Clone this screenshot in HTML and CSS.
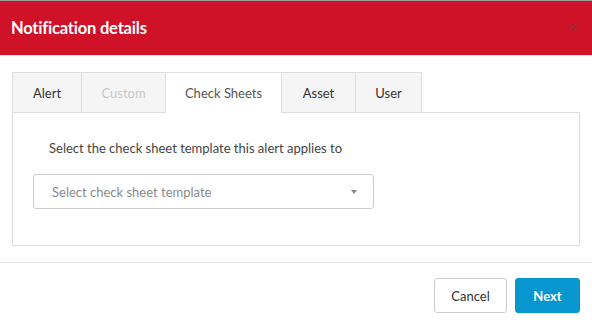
FILE: index.html
```html
<!DOCTYPE html>
<html>
<head>
<meta charset="utf-8">
<link rel="stylesheet" href="styles.css">
</head>
<body>
<div class="modal">
  <div class="modal-header">
    <h1 class="modal-title">Notification details</h1>
    <span class="close">&times;</span>
  </div>
  <div class="modal-body">
    <ul class="tabs">
      <li class="tab">Alert</li>
      <li class="tab disabled">Custom</li>
      <li class="tab active">Check Sheets</li>
      <li class="tab">Asset</li>
      <li class="tab">User</li>
    </ul>
    <div class="tab-panel">
      <p class="label">Select the check sheet template this alert applies to</p>
      <div class="select">
        <span class="placeholder">Select check sheet template</span>
        <span class="caret"></span>
      </div>
    </div>
  </div>
  <div class="modal-footer">
    <button class="btn btn-default">Cancel</button>
    <button class="btn btn-primary">Next</button>
  </div>
</div>
</body>
</html>
```

FILE: styles.css
```css
* { box-sizing: border-box; }
html, body { margin: 0; padding: 0; background: #fff; }
body { font-family: Lato, "Open Sans", sans-serif; color: #444; }

.modal { width: 592px; height: 325px; border-top: 1px solid #9a9a9a; }

.modal-header {
  background: #cf1228;
  height: 55px;
  display: flex;
  align-items: center;
  justify-content: space-between;
  padding: 0 13px 0 11px;
  border-bottom: 1px solid #e5e5e5;
}
.modal-title { margin: 0; color: #fff; font-size: 16.5px; font-weight: 700; letter-spacing: -0.2px; }
.close { color: #9c2a38; font-size: 18px; line-height: 1; margin-top: -4px; }

.modal-body { padding: 16px 12px 16px 12px; }

.tabs { list-style: none; margin: 0; padding: 0; display: flex; height: 40px; }
.tab {
  background: #f5f5f5;
  border: 1px solid #ddd;
  border-bottom: 0;
  margin-right: -1px;
  height: 40px;
  display: flex;
  align-items: center;
  justify-content: center;
  font-size: 13px;
  color: #333;
}
.tab:nth-child(1) { width: 70px; }
.tab:nth-child(2) { width: 85px; }
.tab:nth-child(3) { width: 117px; }
.tab:nth-child(4) { width: 75px; }
.tab:nth-child(5) { width: 67px; }
.tab.disabled { color: #c8c8c8; }
.tab.active { background: #fff; color: #555; border-color: #e0e0e0; position: relative; z-index: 1; height: 41px; margin-bottom: -1px; }

.tab-panel {
  border: 1px solid #ddd;
  height: 134px;
  padding: 27px 20px 0 20px;
}
.label { margin: 0 0 0 16px; font-size: 13px; color: #444; line-height: 16px; }
.select {
  margin-top: 18px;
  width: 341px;
  height: 35px;
  border: 1px solid #ccc;
  border-radius: 3px;
  display: flex;
  align-items: center;
  justify-content: space-between;
  padding: 0 16px 0 18px;
}
.placeholder { font-size: 13px; color: #8a8a8a; }
.caret {
  width: 0; height: 0;
  margin-top: 1px;
  border-left: 3px solid transparent;
  border-right: 3px solid transparent;
  border-top: 4px solid #888;
}

.modal-footer {
  border-top: 1px solid #e5e5e5;
  height: 63px;
  display: flex;
  justify-content: flex-end;
  align-items: flex-start;
  padding: 15px 12px 0 0;
  gap: 8px;
}
.btn {
  font-family: inherit;
  font-size: 13px;
  height: 35px;
  border-radius: 3px;
  padding: 0;
  cursor: pointer;
}
.btn-default { width: 73px; background: #fff; border: 1px solid #ccc; color: #333; }
.btn-primary { width: 65px; background: #0796cd; border: 1px solid #0796cd; color: #fff; font-weight: 700; }
```
